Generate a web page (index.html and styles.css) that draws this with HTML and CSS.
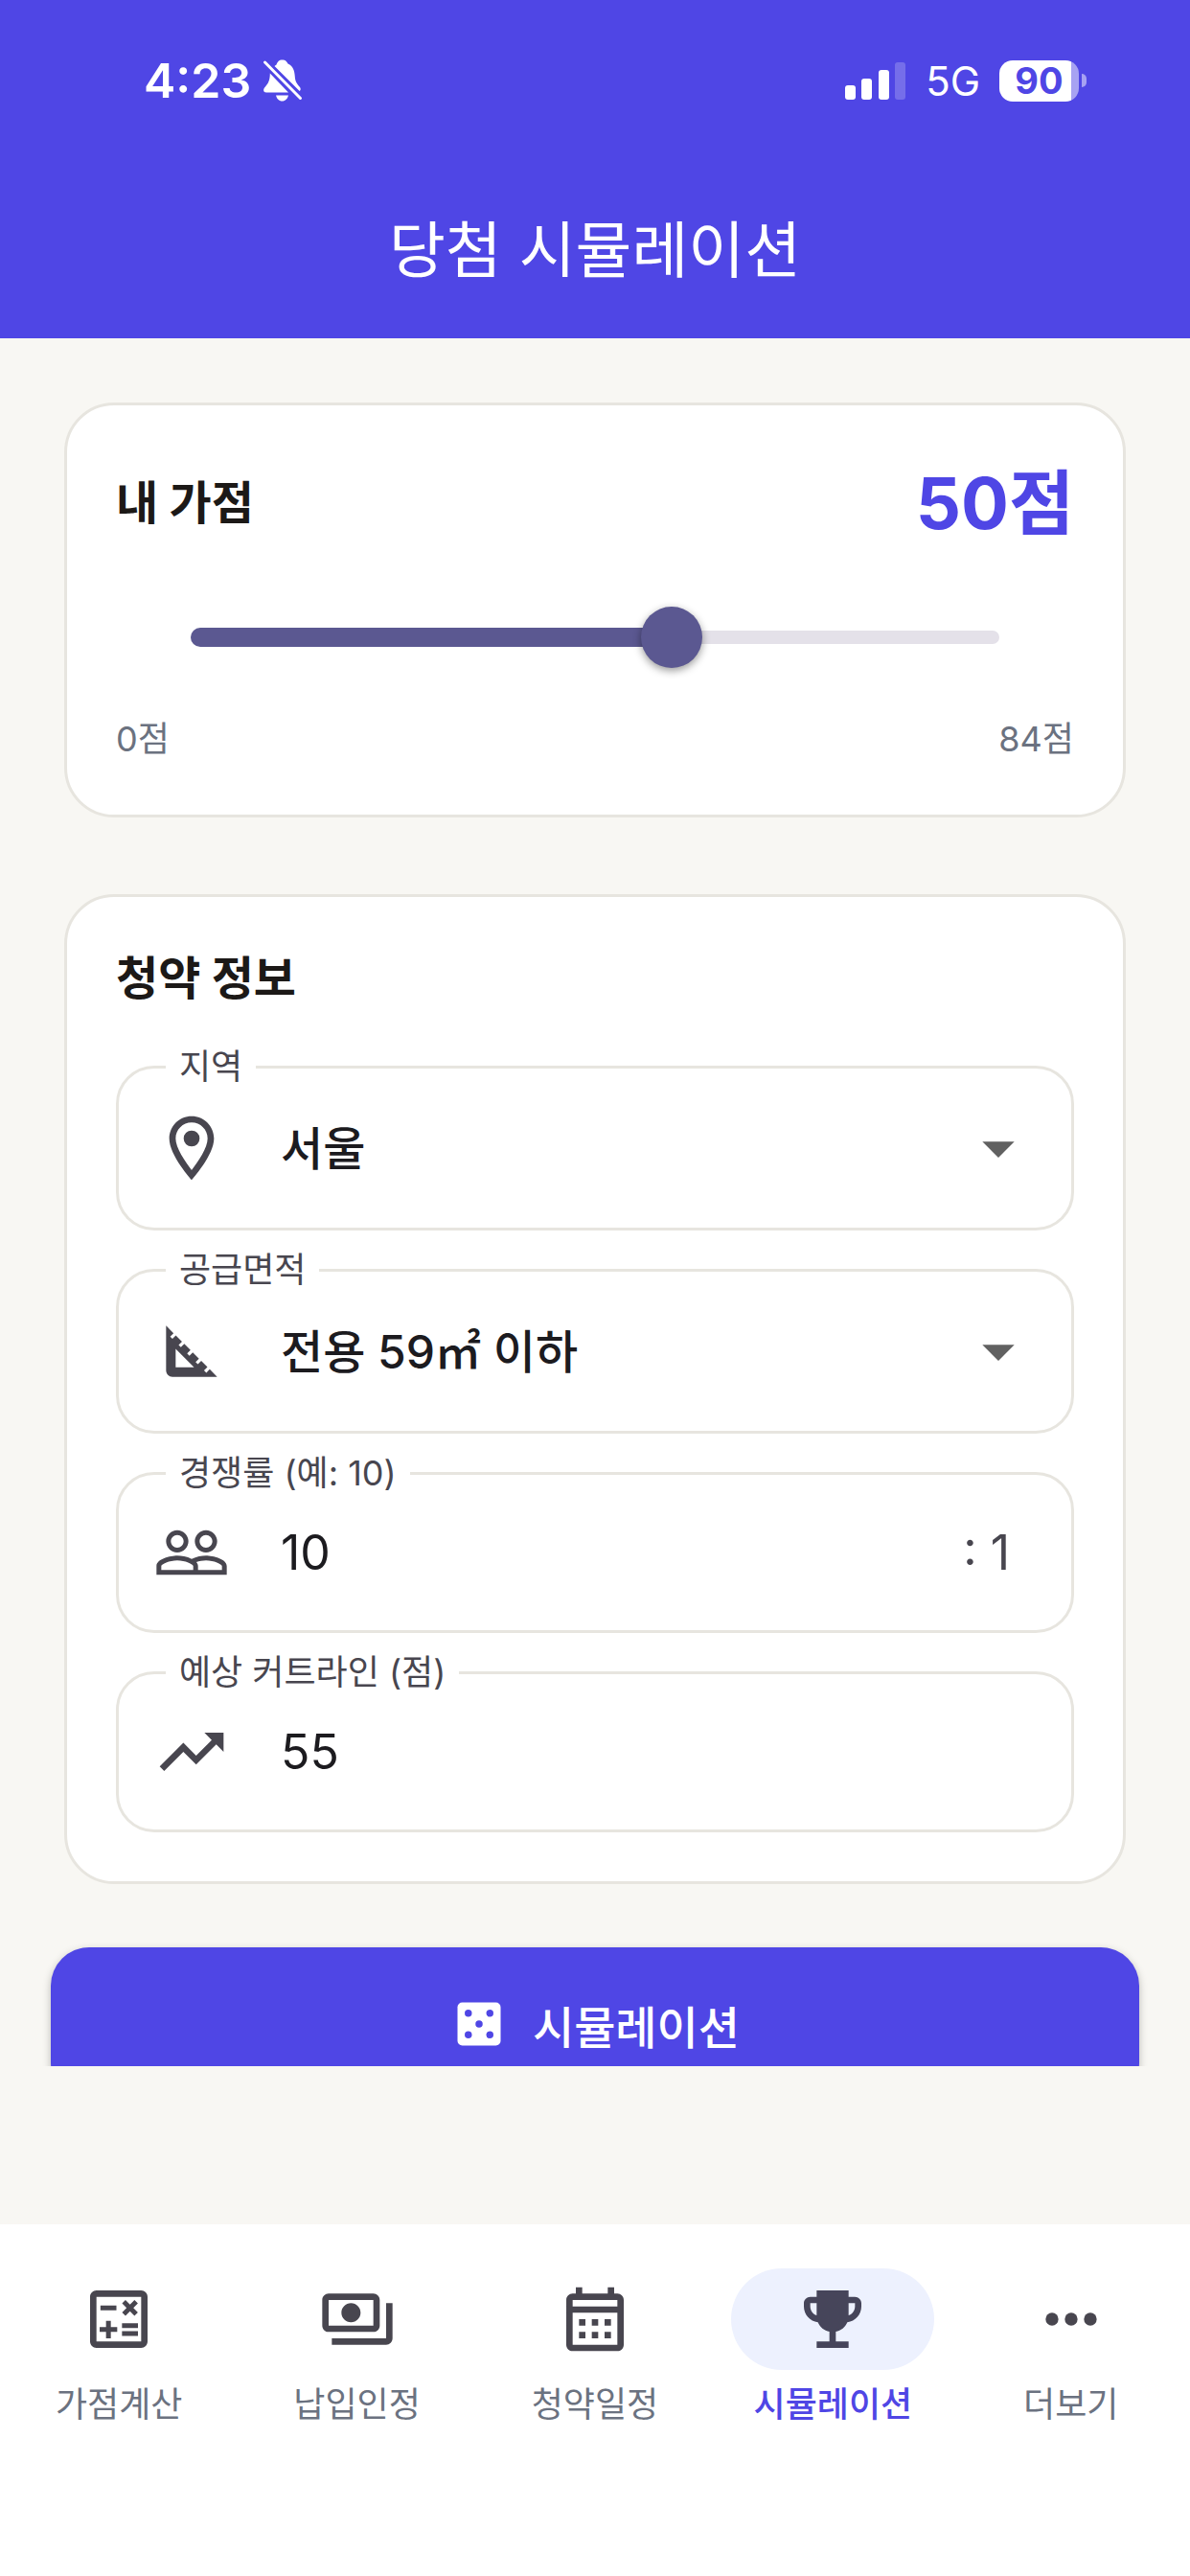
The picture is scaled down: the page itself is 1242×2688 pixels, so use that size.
FILE: index.html
```html
<!DOCTYPE html>
<html lang="ko">
<head>
  <meta charset="utf-8">
  <meta name="viewport" content="width=device-width, initial-scale=1">
  <title>당첨 시뮬레이션</title>
  <link rel="stylesheet" href="styles.css">
</head>
<body class="app">
  <header class="app-header">
    <div class="status">
      <div class="status-side">
        <span class="clock">4:23</span>
        <svg class="bell" viewBox="0 0 42 46" aria-hidden="true">
          <path fill="currentColor" d="M14.500 6.500C16 3 17 1.500 20.500 1.500S25 3 26.500 5.500C32 8 33.500 13 33.800 19C34 24 36 26.500 39 30C40 31.500 40 33 38.600 34L12.500 8C13 7.400 13.800 7 14.500 6.500ZM7.800 15.500L27 35.500H4C0.500 35.500 0.500 32 2.500 30C6 26 7.800 23 7.800 15.500ZM14 38.500H27C26 42 24 44.500 20.500 44.500S15 42 14 38.500Z"/>
          <path stroke="currentColor" stroke-width="3" stroke-linecap="round" d="M2.500 4L39.500 41.500"/>
        </svg>
      </div>
      <div class="status-side">
        <svg class="signal" viewBox="0 0 64 40" fill="currentColor" aria-hidden="true">
          <rect x="0" y="25" width="11" height="15" rx="3"/>
          <rect x="17" y="18" width="11" height="22" rx="3"/>
          <rect x="35" y="9" width="11" height="31" rx="3"/>
          <rect x="52" y="1" width="11" height="39" rx="3" opacity=".22"/>
        </svg>
        <span class="network">5G</span>
        <span class="battery"><span class="battery-level">90</span></span>
      </div>
    </div>
    <h1 class="app-title">당첨 시뮬레이션</h1>
  </header>

  <main class="content">
    <section class="card score">
      <div class="score-head">
        <h2 class="card-title"><label for="score">내 가점</label></h2>
        <output class="score-value" for="score">50점</output>
      </div>
      <div class="slider">
        <div class="slider-track"><div class="slider-fill" style="width:60%"></div></div>
        <input class="slider-input" id="score" type="range" min="0" max="84" value="50">
      </div>
      <div class="score-scale"><span>0점</span><span>84점</span></div>
    </section>

    <section class="card info">
      <h2 class="card-title">청약 정보</h2>
      <div class="fields">
        <div class="field">
          <label class="field-label" for="region">지역</label>
          <svg class="icon" viewBox="0 0 24 24" aria-hidden="true"><path d="M12 2C8.130 2 5 5.130 5 9c0 5.250 7 13 7 13s7-7.750 7-13c0-3.870-3.130-7-7-7zM7 9c0-2.760 2.240-5 5-5s5 2.240 5 5c0 2.880-2.880 7.190-5 9.880C9.920 16.210 7 11.850 7 9z"/><circle cx="12" cy="9" r="2.500"/></svg>
          <select class="field-control" id="region"><option>서울</option></select>
          <svg class="icon icon-arrow" viewBox="0 0 24 24" aria-hidden="true"><path d="M7 10l5 5 5-5z"/></svg>
        </div>
        <div class="field">
          <label class="field-label" for="area">공급면적</label>
          <svg class="icon" viewBox="0 0 24 24" aria-hidden="true"><path d="M17.660 17.660l-1.060 1.060-.71-.71 1.060-1.060-1.940-1.940-1.060 1.060-.71-.71 1.060-1.060-1.940-1.940-1.060 1.060-.71-.71 1.060-1.060L9.700 9.700l-1.060 1.060-.71-.71 1.060-1.060-1.940-1.940-1.060 1.060-.71-.71 1.060-1.060L4 4v14c0 1.100.9 2 2 2h14l-2.340-2.340zM7 17v-5.760L12.760 17H7z"/></svg>
          <select class="field-control" id="area"><option>전용 59㎡ 이하</option></select>
          <svg class="icon icon-arrow" viewBox="0 0 24 24" aria-hidden="true"><path d="M7 10l5 5 5-5z"/></svg>
        </div>
        <div class="field field-text">
          <label class="field-label" for="rate">경쟁률 (예: 10)</label>
          <svg class="icon" viewBox="0 0 24 24" aria-hidden="true"><path d="M16.500 13c-1.200 0-3.070.34-4.500 1-1.430-.67-3.300-1-4.500-1C5.330 13 1 14.080 1 16.250V19h22v-2.750c0-2.170-4.330-3.250-6.500-3.250zm-4 4.500h-10v-1.250c0-.54 2.560-1.750 5-1.750s5 1.210 5 1.750v1.250zm9 0H14v-1.250c0-.46-.2-.86-.52-1.220.88-.3 1.960-.53 3.020-.53 2.440 0 5 1.210 5 1.750v1.250zM7.500 12c1.930 0 3.500-1.570 3.500-3.500S9.430 5 7.500 5 4 6.570 4 8.500 5.570 12 7.500 12zm0-5.500c1.100 0 2 .9 2 2s-.9 2-2 2-2-.9-2-2 .9-2 2-2zm9 5.500c1.930 0 3.500-1.570 3.500-3.500S18.430 5 16.500 5 13 6.570 13 8.500s1.570 3.500 3.500 3.500zm0-5.500c1.100 0 2 .9 2 2s-.9 2-2 2-2-.9-2-2 .9-2 2-2z"/></svg>
          <input class="field-control" id="rate" type="text" inputmode="numeric" value="10">
          <span class="field-suffix">: 1</span>
        </div>
        <div class="field field-text">
          <label class="field-label" for="cutline">예상 커트라인 (점)</label>
          <svg class="icon" viewBox="0 0 24 24" aria-hidden="true"><path d="M16 6l2.290 2.290-4.880 4.880-4-4L2 16.590 3.410 18l6-6 4 4 6.300-6.290L22 12V6z"/></svg>
          <input class="field-control" id="cutline" type="text" inputmode="numeric" value="55">
        </div>
      </div>
    </section>

    <button class="run" type="button">
      <svg class="run-icon" viewBox="0 0 24 24" aria-hidden="true">
        <rect x="3" y="3" width="18" height="18" rx="2" fill="currentColor"/>
        <g class="run-dots"><circle cx="7.500" cy="7.500" r="1.500"/><circle cx="16.500" cy="7.500" r="1.500"/><circle cx="12" cy="12" r="1.500"/><circle cx="7.500" cy="16.500" r="1.500"/><circle cx="16.500" cy="16.500" r="1.500"/></g>
      </svg>
      시뮬레이션
    </button>
  </main>

  <nav class="tabs">
    <a class="tab" href="#score-calc">
      <span class="tab-icon"><svg class="icon" viewBox="0 0 24 24" aria-hidden="true"><path d="M19 3H5c-1.100 0-2 .9-2 2v14c0 1.100.9 2 2 2h14c1.100 0 2-.9 2-2V5c0-1.100-.9-2-2-2zm0 16H5V5h14v14zM6.250 7.720h5v1.500h-5zM13 15.750h5v1.500h-5zM13 13.250h5v1.500h-5zM8 18h1.500v-2h2v-1.500h-2v-2H8v2H6V16h2zM14.090 10.950l1.410-1.410 1.410 1.410 1.060-1.060-1.410-1.420 1.410-1.410L16.910 6 15.500 7.410 14.090 6l-1.060 1.060 1.410 1.410-1.410 1.420z"/></svg></span>
      가점계산
    </a>
    <a class="tab" href="#payments">
      <span class="tab-icon"><svg class="icon" viewBox="0 0 24 24" aria-hidden="true"><path d="M19 14V6c0-1.100-.9-2-2-2H3c-1.100 0-2 .9-2 2v8c0 1.100.9 2 2 2h14c1.100 0 2-.9 2-2zm-2 0H3V6h14v8zm-7-7c-1.660 0-3 1.340-3 3s1.340 3 3 3 3-1.340 3-3-1.340-3-3-3zm13 0v11c0 1.100-.9 2-2 2H4v-2h17V7h2z"/></svg></span>
      납입인정
    </a>
    <a class="tab" href="#schedule">
      <span class="tab-icon"><svg class="icon" viewBox="0 0 24 24" aria-hidden="true"><path d="M19 4h-1V2h-2v2H8V2H6v2H5c-1.110 0-1.990.9-1.990 2L3 20c0 1.100.89 2 2 2h14c1.100 0 2-.9 2-2V6c0-1.100-.9-2-2-2zm0 16H5V10h14v10zm0-12H5V6h14v2zM9 14H7v-2h2v2zm4 0h-2v-2h2v2zm4 0h-2v-2h2v2zm-8 4H7v-2h2v2zm4 0h-2v-2h2v2zm4 0h-2v-2h2v2z"/></svg></span>
      청약일정
    </a>
    <a class="tab tab-active" href="#simulation" aria-current="page">
      <span class="tab-icon"><svg class="icon" viewBox="0 0 24 24" aria-hidden="true"><path d="M19 5h-2V3H7v2H5c-1.100 0-2 .9-2 2v1c0 2.550 1.920 4.630 4.390 4.940.63 1.500 1.980 2.630 3.610 2.960V19H7v2h10v-2h-4v-3.100c1.630-.33 2.980-1.460 3.610-2.960C19.080 12.630 21 10.550 21 8V7c0-1.100-.9-2-2-2zM5 8V7h2v3.820C5.840 10.400 5 9.300 5 8zm14 0c0 1.300-.84 2.400-2 2.820V7h2v1z"/></svg></span>
      시뮬레이션
    </a>
    <a class="tab" href="#more">
      <span class="tab-icon"><svg class="icon" viewBox="0 0 24 24" aria-hidden="true"><circle cx="6" cy="12" r="2"/><circle cx="12" cy="12" r="2"/><circle cx="18" cy="12" r="2"/></svg></span>
      더보기
    </a>
  </nav>
</body>
</html>
```
FILE: styles.css
```css
:root {
  --primary: #4f46e5;
  --page: #f8f7f3;
  --line: #e7e5df;
  --icon: #48464f;
  --muted: #6b7280;
}

* {
  box-sizing: border-box;
}

.app {
  margin: 0;
  height: 100vh;
  display: flex;
  flex-direction: column;
  background: var(--page);
  color: #1c1917;
  font-family: Inter, "Noto Sans CJK KR", sans-serif;
}

/* Header */

.app-header {
  flex: none;
  background: var(--primary);
  color: #fff;
}

.status {
  height: 168px;
  padding: 0 108px 0 150px;
  display: flex;
  justify-content: space-between;
  align-items: center;
}

.status-side {
  display: flex;
  align-items: center;
}

.clock {
  font-size: 50px;
  font-weight: 600;
}

.bell {
  width: 42px;
  height: 46px;
  margin-left: 12px;
}

.signal {
  width: 64px;
  height: 40px;
  margin-right: 20px;
}

.network {
  font-size: 42px;
  margin-right: 20px;
}

.battery {
  display: flex;
  align-items: center;
  gap: 3px;
}

.battery::after {
  content: "";
  width: 5px;
  height: 14px;
  border-radius: 0 7px 7px 0;
  background: #a7a2f2;
}

.battery-level {
  width: 83px;
  height: 43px;
  border-radius: 14px;
  background: linear-gradient(to right, #fff 90%, #a7a2f2 90%);
  color: var(--primary);
  font-size: 38px;
  font-weight: 700;
  line-height: 43px;
  text-align: center;
}

.app-title {
  margin: 0;
  font-size: 64px;
  font-weight: 400;
  line-height: 185px;
  text-align: center;
}

.content {
  flex: 1;
  min-height: 0;
  margin-bottom: 165px;
  padding: 67px 53px 0;
  overflow: hidden;
}

.card {
  margin: 0 14px;
  padding: 51px;
  border: 3px solid var(--line);
  border-radius: 52px;
  background: #fff;
}

.card-title {
  margin: 0;
  font-size: 48px;
  font-weight: 700;
  line-height: 68px;
}

.score-head {
  display: flex;
  justify-content: space-between;
  align-items: center;
  margin-bottom: 17px;
}

.score-value {
  color: var(--primary);
  font-size: 74px;
  font-weight: 700;
  line-height: 102px;
}

.slider {
  display: grid;
  align-items: center;
  height: 144px;
  padding: 0 46px;
}

.slider-track,
.slider-input {
  grid-area: 1 / 1;
}

.slider-track {
  display: flex;
  align-items: center;
  height: 14px;
  margin: 0 32px;
  border-radius: 7px;
  background: #e4e1e9;
}

.slider-fill {
  height: 20px;
  border-radius: 10px;
  background: #5b5891;
}

.slider-input {
  appearance: none;
  width: 100%;
  height: 64px;
  margin: 0;
  background: transparent;
}

.slider-input::-webkit-slider-thumb {
  appearance: none;
  width: 64px;
  height: 64px;
  border-radius: 50%;
  background: #5b5891;
  box-shadow: 0 3px 8px rgba(0, 0, 0, .4);
}

.score-scale {
  display: flex;
  justify-content: space-between;
  padding-top: 6px;
  color: var(--muted);
  font-size: 36px;
  line-height: 56px;
}

/* Form fields */

.info {
  margin-top: 80px;
}

.fields {
  display: grid;
  grid-template-columns: minmax(0, 1fr);
  gap: 40px;
  margin-top: 57px;
}

.field {
  position: relative;
  display: flex;
  align-items: center;
  height: 172px;
  padding: 0 36px;
  border: 3px solid var(--line);
  border-radius: 40px;
}

.field-text {
  height: 168px;
}

.field-label {
  position: absolute;
  top: -24px;
  left: 49px;
  padding: 0 14px;
  background: #fff;
  color: var(--icon);
  font-size: 36px;
  line-height: 44px;
}

.icon {
  flex: none;
  width: 80px;
  height: 80px;
  fill: var(--icon);
}

.icon-arrow {
  fill: #616161;
  pointer-events: none;
}

.field-control {
  appearance: none;
  flex: 1;
  min-width: 0;
  height: 100%;
  margin: 0 0 0 53px;
  padding: 0;
  border: 0;
  background: transparent;
  color: #1c1b1f;
  font: 500 48px Inter, "Noto Sans CJK KR", sans-serif;
}

.field-text .field-control {
  font-size: 50px;
  font-weight: 400;
}

.field-suffix {
  margin-right: 28px;
  color: var(--icon);
  font-size: 50px;
}

.run {
  width: 100%;
  height: 160px;
  margin-top: 66px;
  display: flex;
  justify-content: center;
  align-items: center;
  gap: 26px;
  border: 0;
  border-radius: 40px;
  background: var(--primary);
  box-shadow: 0 3px 8px rgba(0, 0, 0, .25);
  color: #fff;
  font: 500 47px Inter, "Noto Sans CJK KR", sans-serif;
}

.run-icon {
  width: 60px;
  height: 60px;
}

.run-dots {
  fill: var(--primary);
}

/* Bottom tabs */

.tabs {
  flex: none;
  display: grid;
  grid-template-columns: repeat(5, 1fr);
  padding: 46px 0 157px;
  background: #fff;
}

.tab {
  display: flex;
  flex-direction: column;
  align-items: center;
  gap: 14px;
  color: var(--muted);
  font-size: 36px;
  line-height: 44px;
  text-decoration: none;
}

.tab-icon {
  width: 212px;
  height: 106px;
  display: flex;
  justify-content: center;
  align-items: center;
  border-radius: 53px;
}

.tab-active {
  color: var(--primary);
  font-weight: 500;
}

.tab-active .tab-icon {
  background: #edf1fe;
}

.tab-active .icon {
  fill: #46455a;
}
```
